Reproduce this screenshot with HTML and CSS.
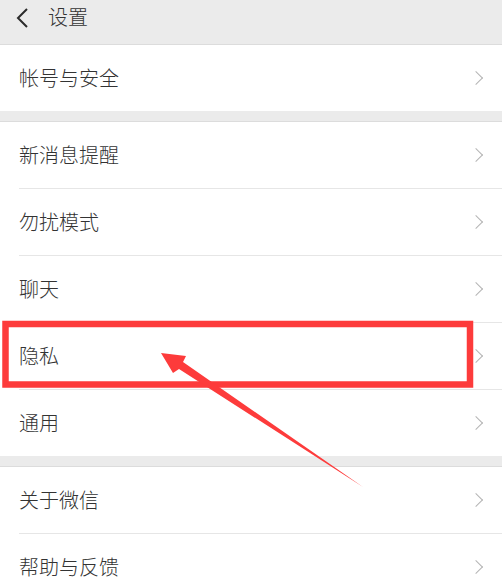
FILE: index.html
```html
<!DOCTYPE html>
<html lang="zh-CN">
<head>
  <meta charset="UTF-8" />
  <meta name="viewport" content="width=device-width, initial-scale=1.0"/>
  <title>设置</title>
  <link rel="stylesheet" href="styles.css">
</head>
<body>

  <!-- Top Bar -->
  <div class="top-bar">
    <svg class="back" width="14" height="20" viewBox="0 0 14 20">
      <path d="M11 1 L2 10 L11 19" fill="none" stroke="#2b2b2b" stroke-width="2"/>
    </svg>
    <span class="title">设置</span>
  </div>

  <div class="group first">
    <div class="row"><span>帐号与安全</span><i class="arrow"></i></div>
  </div>

  <div class="group">
    <div class="row"><span>新消息提醒</span><i class="arrow"></i></div>
    <div class="row"><span>勿扰模式</span><i class="arrow"></i></div>
    <div class="row"><span>聊天</span><i class="arrow"></i></div>
    <div class="row"><span>隐私</span><i class="arrow"></i></div>
    <div class="row"><span>通用</span><i class="arrow"></i></div>
  </div>

  <div class="group">
    <div class="row"><span>关于微信</span><i class="arrow"></i></div>
    <div class="row"><span>帮助与反馈</span><i class="arrow"></i></div>
  </div>

  <!-- annotation drawn over the screenshot -->
  <svg class="markup" width="502" height="587" viewBox="0 0 502 587">
    <rect x="5.5" y="324" width="464.5" height="60.5" fill="none" stroke="#fd3b3b" stroke-width="6.5"/>
    <polygon points="161,353 186,356 183,362 363,487 179,369 173,373" fill="#fd3b3b"/>
  </svg>

</body>
</html>
```

FILE: styles.css
```css
* { margin: 0; padding: 0; box-sizing: border-box; }
body {
  background-color: #ebebeb;
  font-family: "Noto Sans CJK SC", "Noto Sans", sans-serif;
  font-weight: 300;
  color: #333;
  overflow: hidden;
  position: relative;
}

.top-bar {
  height: 45px;
  display: flex;
  align-items: center;
  padding-left: 16px;
  background-color: #ebebeb;
  border-bottom: 1px solid #dcdcdc;
}

.top-bar .back {
  margin-right: 18px;
  margin-top: -9px;
}

.top-bar .title {
  font-size: 20px;
  line-height: 1;
  margin-top: -10px;
}

.group {
  background-color: #fff;
  margin-top: 10px;
  border-top: 1px solid #dcdcdc;
}

.group.first {
  margin-top: 0;
  border-top: none;
}

.row {
  height: 67px;
  display: flex;
  align-items: center;
  justify-content: space-between;
  padding-right: 21px;
  margin-left: 19px;
  border-bottom: 1px solid #e6e6e6;
  font-size: 20px;
}

.group.first .row {
  height: 66px;
  border-bottom: none;
}

.group .row:last-child {
  border-bottom: none;
  height: 66px;
}

.row span {
  line-height: 1;
}

.arrow {
  width: 10px;
  height: 10px;
  border-top: 1.6px solid #b4b4b4;
  border-right: 1.6px solid #b4b4b4;
  transform: rotate(45deg);
}

.markup {
  position: absolute;
  top: 0;
  left: 0;
  pointer-events: none;
}
```
